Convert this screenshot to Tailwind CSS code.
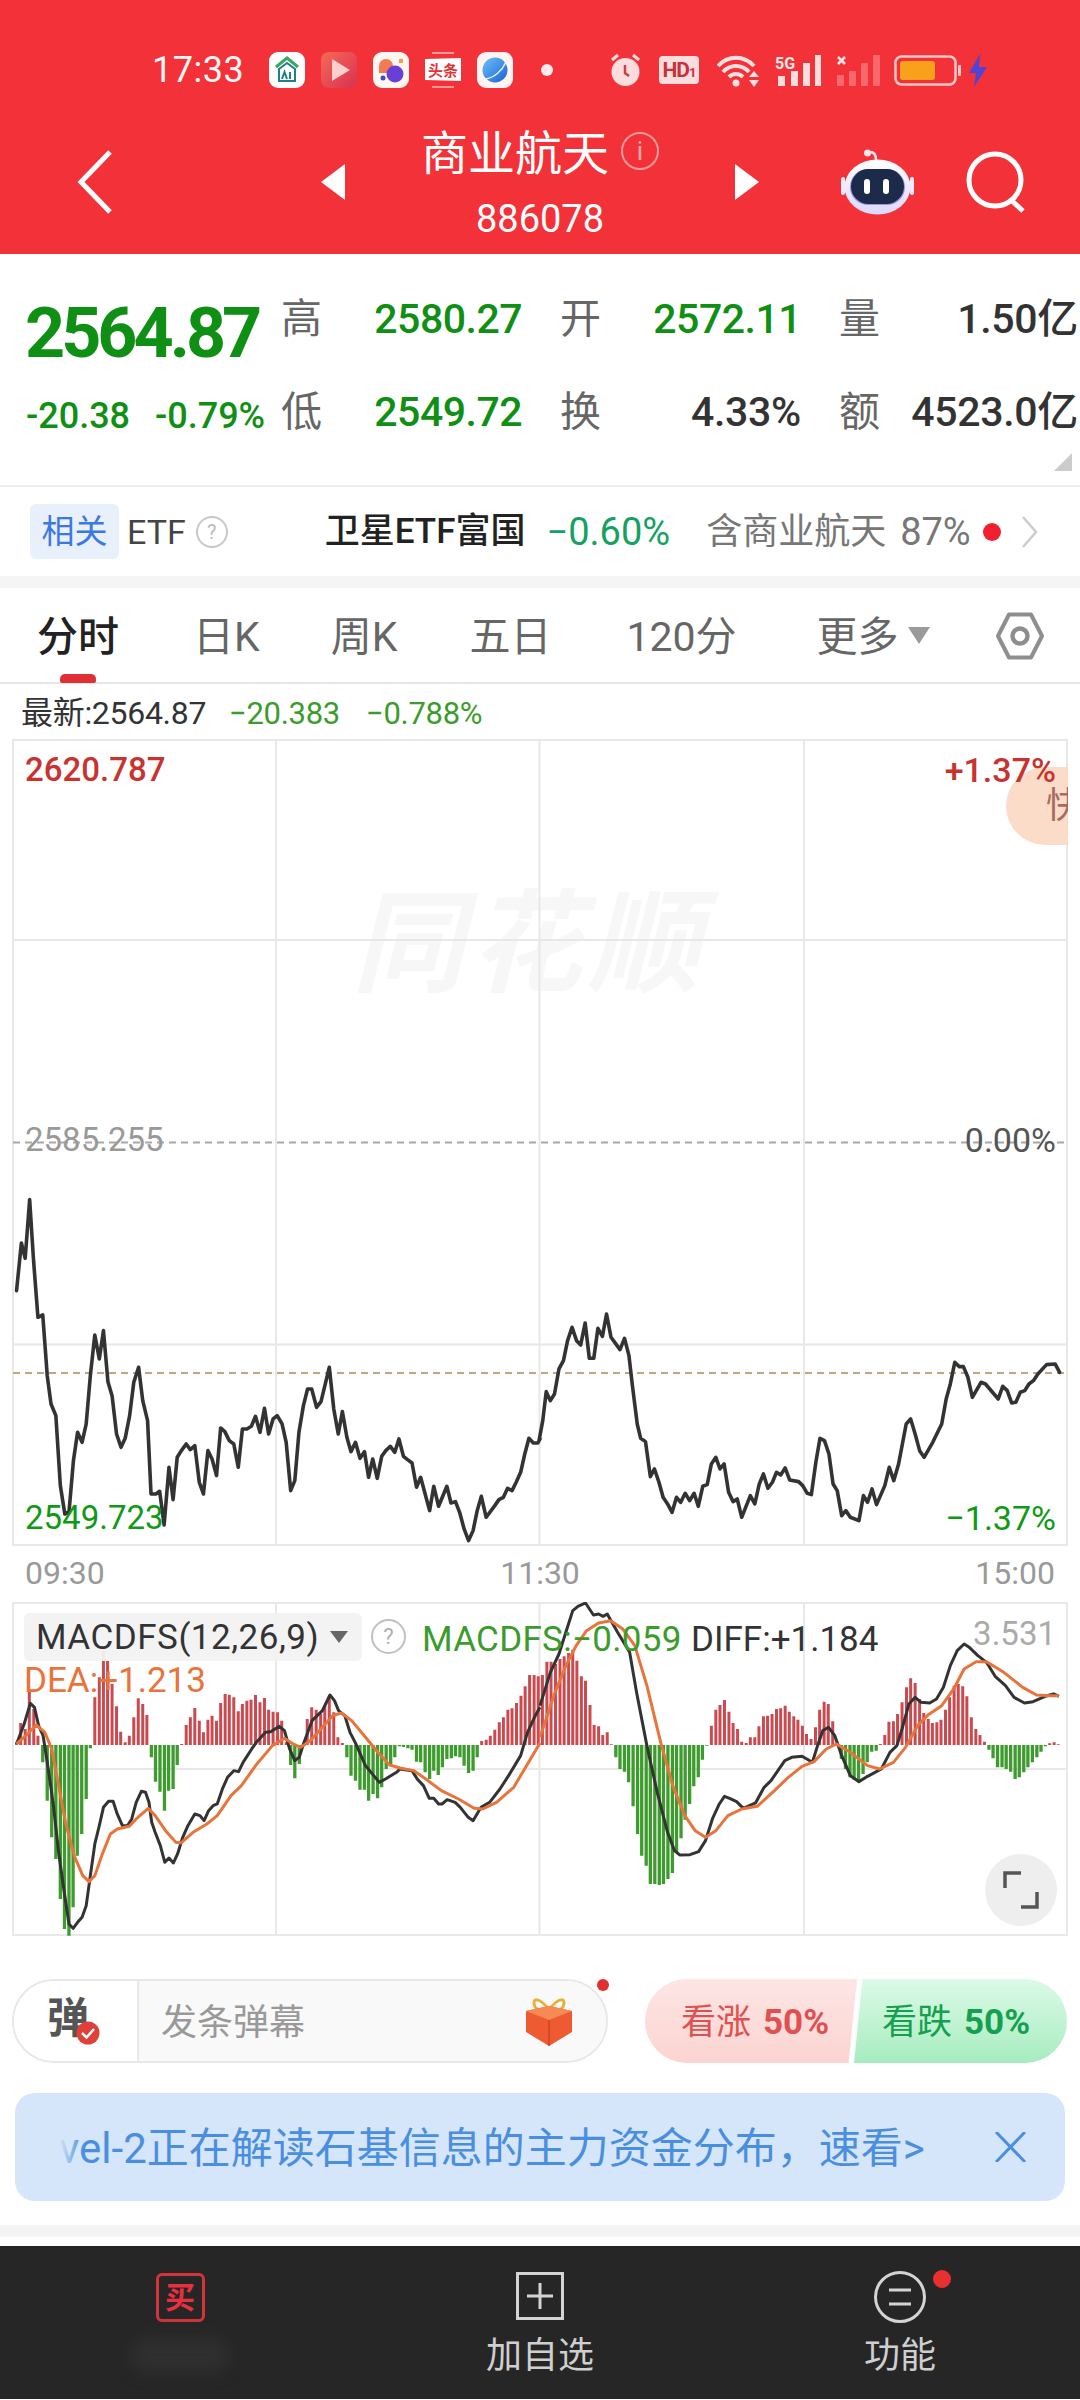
<!DOCTYPE html>
<html lang="zh-CN">
<head>
<meta charset="utf-8">
<script src="https://cdn.jsdelivr.net/npm/@tailwindcss/browser@4"></script>
</head>
<body class="m-0 bg-white font-['Roboto','Noto_Sans_CJK_SC',sans-serif]">
<div class="w-[1080px] h-[2400px] overflow-hidden flex flex-col bg-white">

<!-- HEADER -->
<header class="h-[254px] shrink-0 bg-[#f23238] flex flex-col text-white">
  <div class="mt-[50px] h-[40px] flex items-center pl-[152px]">
    <span class="w-[92px] text-[36px] leading-none text-[#fff6f6] tracking-[0.5px]">17:33</span>
    <svg class="ml-[25px]" width="36" height="36" viewBox="0 0 36 36"><rect width="36" height="36" rx="9" fill="#fff"/><path d="M7 15 18 6l11 9" fill="none" stroke="#3aa864" stroke-width="3"/><path d="M10 17 18 11l8 6v12H10z" fill="none" stroke="#1f7f8c" stroke-width="2"/><path d="M13 27l2.500-7 2.500 7M21 20v7" fill="none" stroke="#1f7f8c" stroke-width="2"/></svg>
    <svg class="ml-[16px]" width="36" height="36" viewBox="0 0 36 36"><defs><linearGradient id="p1" x1="0" y1="0" x2="1" y2="1"><stop offset="0" stop-color="#f56a58"/><stop offset="1" stop-color="#d9304f"/></linearGradient></defs><rect width="36" height="36" rx="8" fill="url(#p1)"/><path d="M11 7 29 18 11 29z" fill="#fbd0cc"/></svg>
    <svg class="ml-[16px]" width="36" height="36" viewBox="0 0 36 36"><rect width="36" height="36" rx="9" fill="#fff6f2"/><path d="M6 21V14a7 7 0 0 1 14 0v7z" fill="#f47a50"/><circle cx="22" cy="22" r="8.500" fill="#6a3fd8"/><rect x="26" y="7" width="4" height="4" fill="#f2a13a"/><circle cx="10" cy="26" r="2.500" fill="#3f4fb8"/></svg>
    <svg class="ml-[16px]" width="36" height="36" viewBox="0 0 36 36"><path d="M7 1h22M7 35h22" stroke="#fff" stroke-width="1"/><path d="M0 7 36 6V29L0 28z" fill="#fff"/><text x="18" y="24" text-anchor="middle" font-size="15" font-weight="700" fill="#e0353a" font-family="Noto Sans CJK SC">头条</text></svg>
    <svg class="ml-[16px]" width="36" height="36" viewBox="0 0 36 36"><defs><linearGradient id="p2" x1="0" y1="0" x2="1" y2="1"><stop offset="0" stop-color="#6cc0f6"/><stop offset="1" stop-color="#1a62d8"/></linearGradient></defs><rect width="36" height="36" rx="9" fill="#fff4f2"/><circle cx="18" cy="18" r="12.500" fill="url(#p2)"/><path d="M8 27C17 26 25 19 29 10" fill="none" stroke="#e8f4ff" stroke-width="1.500"/></svg>
    <span class="ml-[28px] w-[12px] h-[12px] rounded-full bg-[#fdeaea]"></span>
    <svg class="ml-[56px]" width="33" height="34" viewBox="0 0 33 34"><circle cx="16.500" cy="19" r="14" fill="#fcdcdc"/><path d="M3 7 9 2M30 7 24 2" stroke="#fcdcdc" stroke-width="3"/><path d="M16 12v8l4 3" fill="none" stroke="#c8404a" stroke-width="2.500"/></svg>
    <span class="ml-[17px] w-[40px] h-[28px] rounded-[4px] bg-[#fcdcdc] text-[#c8303a] text-[21px] font-bold leading-[28px] text-center tracking-[-1px]">HD<span class="text-[13px]">1</span></span>
    <svg class="ml-[18px]" width="45" height="33" viewBox="0 0 45 33"><path d="M1 12C11 1 27 1 37 12M6 18C13 10 25 10 32 18M12 23C16 19 22 19 26 23" fill="none" stroke="#fde0e0" stroke-width="4"/><circle cx="19" cy="29" r="3.500" fill="#fde0e0"/><path d="M37 17l5 6h-10zM37 33l5-7h-10z" fill="#fde0e0"/></svg>
    <svg class="ml-[13px]" width="47" height="32" viewBox="0 0 47 32"><rect x="3" y="22" width="7" height="10" fill="#fcdcdc"/><rect x="16" y="17" width="7" height="15" fill="#fcdcdc"/><rect x="28" y="9" width="7" height="23" fill="#fcdcdc"/><rect x="40" y="1" width="6" height="31" fill="#fcdcdc"/><text x="0" y="15" font-size="16" font-weight="700" fill="#fde6e6" font-family="Roboto">5G</text></svg>
    <svg class="ml-[14px]" width="44" height="32" viewBox="0 0 44 32"><rect x="1" y="21" width="7" height="11" fill="#f9696c"/><rect x="13" y="17" width="7" height="15" fill="#f9696c"/><rect x="25" y="9" width="7" height="23" fill="#f9696c"/><rect x="37" y="1" width="7" height="31" fill="#f9696c"/><path d="M2 3l7 7M9 3 2 10" stroke="#fde6e6" stroke-width="2.500"/></svg>
    <svg class="ml-[14px]" width="68" height="31" viewBox="0 0 68 31"><rect x="1.500" y="1.500" width="60" height="28" rx="6" fill="none" stroke="#fbc8c8" stroke-width="2.500"/><rect x="6" y="6" width="35" height="19" rx="3" fill="#f9a11b"/><rect x="64" y="10" width="3" height="11" rx="1" fill="#fbc8c8"/></svg>
    <svg class="ml-[6px]" width="20" height="33" viewBox="0 0 20 33"><path d="M12 0 1 19h7l-2 14 13-20h-8z" fill="#4f45d4"/></svg>
  </div>
  <div class="mt-[40px] h-[104px] flex items-center pl-[77px]">
    <svg width="36" height="64" viewBox="0 0 36 64"><path d="M33 2 4 32 33 62" fill="none" stroke="#fff" stroke-width="5"/></svg>
    <svg class="ml-[208px]" width="24" height="36" viewBox="0 0 24 36"><path d="M24 0V36L0 18z" fill="#fff"/></svg>
    <div class="w-[390px] h-[104px] flex flex-col items-center">
      <div class="flex items-center h-[46px] mt-[1px]">
        <span class="text-[47px] leading-[46px]">商业航天</span>
        <span class="ml-[12px] -mt-[6px] w-[38px] h-[38px] rounded-full border-2 border-white/50 text-white/60 text-[26px] leading-[34px] text-center">i</span>
      </div>
      <span class="mt-[22px] text-[38px] leading-[40px]">886078</span>
    </div>
    <svg width="24" height="36" viewBox="0 0 24 36"><path d="M0 0V36L24 18z" fill="#fff"/></svg>
    <svg class="ml-[81px]" width="74" height="66" viewBox="0 0 74 66"><defs><linearGradient id="rb" x1="0" y1="0" x2="0" y2="1"><stop offset="0" stop-color="#fff"/><stop offset="1" stop-color="#dcd8fb"/></linearGradient></defs><circle cx="27.500" cy="4" r="3.500" fill="#fbe4ea"/><path d="M30 3c4 0 6 3 6 8" fill="none" stroke="#f4e8f0" stroke-width="2.500"/><rect x="1" y="28" width="4" height="18" rx="2" fill="#eeeafc"/><rect x="70" y="28" width="4" height="18" rx="2" fill="#eeeafc"/><ellipse cx="37.500" cy="38" rx="33" ry="27.500" fill="url(#rb)"/><rect x="10" y="20" width="55" height="36" rx="18" fill="#9c92ee"/><rect x="11" y="20" width="53" height="35" rx="17.500" fill="#1d2b4b"/><rect x="24" y="30" width="6" height="15" rx="3" fill="#fff"/><rect x="43" y="30" width="6" height="15" rx="3" fill="#fff"/></svg>
    <svg class="ml-[52px]" width="62" height="62" viewBox="0 0 62 62"><circle cx="29" cy="29" r="26" fill="none" stroke="#fff" stroke-width="5"/><path d="M44 48 57 60" stroke="#fff" stroke-width="5"/></svg>
  </div>
</header>

<!-- STATS -->
<section class="relative h-[231px] shrink-0 flex">
  <div class="w-[281px] pl-[25px] flex flex-col">
    <span class="mt-[50px] text-[70px] leading-[58px] font-bold text-[#0f8f14] tracking-[-4px] whitespace-nowrap">2564.87</span>
    <div class="mt-[34px] flex text-[36px] leading-[40px] font-medium text-[#0f8f14]">
      <span class="w-[130px] pl-[1px]">-20.38</span><span>-0.79%</span>
    </div>
  </div>
  <div class="mt-[40px] grid grid-cols-[241px_241px_239px] gap-x-[38px] gap-y-[43px] h-[143px] text-[41px] leading-[50px] font-medium">
    <div class="flex justify-between"><span class="font-normal text-[#666]">高</span><span class="text-[#0f8f14] tracking-[-0.5px]">2580.27</span></div>
    <div class="flex justify-between"><span class="font-normal text-[#666]">开</span><span class="text-[#0f8f14] tracking-[-0.5px]">2572.11</span></div>
    <div class="flex justify-between"><span class="font-normal text-[#666]">量</span><span class="text-[#333] tracking-[-0.3px]">1.50亿</span></div>
    <div class="flex justify-between"><span class="font-normal text-[#666]">低</span><span class="text-[#0f8f14] tracking-[-0.5px]">2549.72</span></div>
    <div class="flex justify-between"><span class="font-normal text-[#666]">换</span><span class="text-[#333] tracking-[-0.3px]">4.33%</span></div>
    <div class="flex justify-between"><span class="font-normal text-[#666]">额</span><span class="text-[#333] tracking-[-0.3px]">4523.0亿</span></div>
  </div>
  <svg class="absolute right-[8px] bottom-[14px]" width="18" height="18" viewBox="0 0 18 18"><path d="M18 0V18H0z" fill="#ccc"/></svg>
</section>

<!-- ETF ROW -->
<section class="h-[91px] shrink-0 border-t-2 border-[#ececec] flex items-center text-[36px] leading-none">
  <span class="ml-[30px] w-[89px] h-[55px] rounded-[6px] bg-[#e8f0fc] text-[#3d78e0] text-[33px] leading-[55px] text-center">相关</span>
  <span class="ml-[8px] text-[#444] text-[34px]">ETF</span>
  <span class="ml-[10px] w-[32px] h-[32px] rounded-full border-2 border-[#c8c8c8] text-[#bbb] text-[20px] leading-[28px] text-center">?</span>
  <span class="ml-[97px] text-[#222] text-[35px] font-medium whitespace-nowrap">卫星ETF富国</span>
  <span class="ml-[21px] text-[#15a162] text-[38px] whitespace-nowrap">−0.60%</span>
  <span class="ml-[36px] text-[#777] whitespace-nowrap">含商业航天</span>
  <span class="ml-[14px] text-[#777] text-[38px]">87%</span>
  <span class="ml-[12px] w-[18px] h-[18px] rounded-full bg-[#f02030]"></span>
  <svg class="ml-[20px]" width="17" height="32" viewBox="0 0 17 32"><path d="M2 1 15 16 2 31" fill="none" stroke="#ccc" stroke-width="2.500"/></svg>
</section>
<div class="h-[12px] shrink-0 bg-[#f5f5f5]"></div>

<!-- TABS -->
<nav class="relative h-[96px] shrink-0 border-b-2 border-[#e6e6e6] flex items-center pl-[37px] pt-[5px] text-[41px] leading-none text-[#666]">
  <span class="text-[#222] font-medium">分时</span>
  <span class="ml-[74px]">日K</span>
  <span class="ml-[71px]">周K</span>
  <span class="ml-[72px]">五日</span>
  <span class="ml-[75px]">120分</span>
  <span class="ml-[80px]">更多</span>
  <svg class="ml-[9px] -mt-[5px]" width="22" height="17" viewBox="0 0 22 17"><path d="M0 0H22L11 17z" fill="#9a9a9a"/></svg>
  <svg class="absolute left-[996px] top-[24px]" width="48" height="48" viewBox="0 0 48 48"><path d="M13 2.500H35L46 24 35 45.500H13L2 24z" fill="none" stroke="#8e8e8e" stroke-width="4" stroke-linejoin="round"/><circle cx="24" cy="24" r="7.500" fill="none" stroke="#8e8e8e" stroke-width="4.500"/></svg>
  <span class="absolute left-[60px] bottom-[-1px] w-[36px] h-[9px] rounded-t-[5px] rounded-b-[2px] bg-[#e03035]"></span>
</nav>

<!-- LATEST LINE -->
<div class="h-[55px] shrink-0 flex items-center pl-[21px] pt-[3px] text-[31px] leading-none tracking-[-0.3px]">
  <span class="text-[#333] w-[208px] text-[32px] whitespace-nowrap">最新:2564.87</span>
  <span class="text-[#3b9c2c] w-[137px]">−20.383</span>
  <span class="text-[#3b9c2c]">−0.788%</span>
</div>

<!-- MAIN CHART -->
<div class="relative w-[1056px] h-[807px] ml-[12px] shrink-0 overflow-hidden">
  <span class="absolute left-[340px] top-[150px] text-[112px] leading-none font-bold italic text-[#f7f7f7] tracking-[6px] whitespace-nowrap">同花顺</span>
  <svg class="absolute inset-0" width="1056" height="807" viewBox="12 740 1056 807" fill="none">
    <g stroke="#e8e8e8" stroke-width="2">
      <path d="M13 741H1067V1546H13zM276 741V1546M539.500 741V1546M804 741V1546M13 941H1067M13 1345.500H1067"/>
    </g>
    <path d="M13 1143.500H1067" stroke="#a8a8a8" stroke-width="2" stroke-dasharray="7 5"/>
    <path d="M13 1374H1067" stroke="#c2a67e" stroke-width="2" stroke-dasharray="7 5"/>
    <g transform="translate(0 1100) scale(.3448 .3333)" stroke="#333" stroke-width="3.600" stroke-linejoin="round" stroke-linecap="round">
      <polyline vector-effect="non-scaling-stroke" points="48,575 62,432 73,478 86,302 97,480 110,655 124,648 137,830 148,915 162,950 175,1160 188,1245 200,1240 213,1085 225,1000 238,1030 250,975 262,830 275,708 288,780 300,695 313,848 325,890 338,1005 351,1045 363,1018 376,950 388,850 402,805 414,905 428,965 438,1185 452,1185 463,1177 476,1278 490,1105 502,1202 514,1075 526,1055 540,1035 552,1052 565,1040 578,1150 590,1185 603,1055 615,1080 628,1130 640,987 652,998 665,1025 678,1035 691,1105 703,990 716,990 729,982 741,952 754,1000 767,928 779,1005 792,960 804,950 818,975 830,1030 843,1175 855,1145 867,1000 880,920 892,870 904,870 918,925 931,908 955,805 968,930 981,1005 993,938 1006,1015 1018,1058 1031,1030 1044,1078 1057,1058 1069,1135 1081,1080 1094,1138 1107,1072 1119,1055 1132,1042 1145,1060 1157,1020 1170,1072 1182,1082 1195,1092 1208,1165 1220,1135 1233,1185 1246,1235 1258,1162 1272,1222 1296,1162 1308,1212 1321,1208 1333,1240 1346,1290 1359,1325 1372,1295 1384,1235 1396,1192 1410,1255 1435,1220 1447,1202 1460,1195 1472,1168 1485,1175 1497,1150 1510,1120 1522,1065 1534,1018 1547,1032 1560,1032 1566,1020"/>
    </g>
    <g transform="translate(540 1100) scale(.3448 .3333)" stroke="#333" stroke-width="3.600" stroke-linejoin="round" stroke-linecap="round">
      <polyline vector-effect="non-scaling-stroke" points="-2,1020 8,965 18,878 30,905 42,885 55,810 68,785 80,725 93,685 106,725 118,738 131,672 143,778 156,778 168,688 181,712 193,645 206,715 232,752 245,718 258,770 268,860 282,975 292,1018 306,1028 320,1133 332,1110 345,1150 357,1195 370,1215 383,1240 396,1195 408,1210 421,1183 434,1205 447,1183 459,1222 472,1162 485,1157 497,1095 510,1075 522,1110 534,1095 547,1180 560,1208 572,1200 585,1255 610,1190 623,1215 636,1155 648,1125 661,1168 674,1150 686,1120 698,1128 711,1107 724,1143 750,1148 762,1160 775,1183 787,1187 800,1090 812,1018 825,1025 838,1065 850,1155 862,1175 875,1250 887,1235 900,1255 925,1265 938,1190 950,1210 963,1170 976,1217 1000,1160 1013,1105 1026,1145 1040,1095 1062,975 1075,960 1088,1005 1101,1055 1114,1075 1139,1030 1165,975 1178,900 1190,855 1203,790 1216,803 1228,803 1241,835 1254,895 1279,850 1292,855 1329,900 1342,862 1355,875 1368,912 1380,910 1393,880 1406,875 1418,855 1431,845 1444,825 1469,797 1494,795 1507,820"/>
    </g>
  </svg>
  <span class="absolute left-[13px] top-[14px] text-[33px] leading-none font-medium text-[#c8332f]">2620.787</span>
  <span class="absolute right-[12px] top-[14px] text-[34px] leading-none font-medium text-[#c8332f] z-10">+1.37%</span>
  <div class="absolute right-0 top-[28px] w-[62px] h-[78px] rounded-l-[39px] bg-[#fbdcc8] overflow-hidden"><span class="absolute left-[40px] top-[21px] text-[36px] leading-none text-[#a96a62]">快</span></div>
  <span class="absolute left-[13px] top-[384px] text-[33px] leading-none text-[#999]">2585.255</span>
  <span class="absolute right-[12px] top-[384px] text-[34px] leading-none text-[#555]">0.00%</span>
  <span class="absolute left-[13px] top-[762px] text-[33px] leading-none text-[#0f9a15]">2549.723</span>
  <span class="absolute right-[12px] top-[762px] text-[34px] leading-none text-[#0f9a15]">−1.37%</span>
</div>

<!-- TIME AXIS -->
<div class="h-[56px] shrink-0 flex items-center justify-between px-[25px] pb-[2px] text-[32px] leading-none text-[#999]">
  <span>09:30</span><span>11:30</span><span>15:00</span>
</div>

<!-- MACD -->
<div class="relative w-[1056px] h-[334px] ml-[12px] shrink-0 overflow-hidden">
  <svg class="absolute inset-0" width="1056" height="334" viewBox="12 1603 1056 334" fill="none">
    <path d="M13 1604H1067V1936H13zM276 1604V1936M539.500 1604V1936M804 1604V1936M13 1770H1067" stroke="#e8e8e8" stroke-width="2"/>
    <g transform="translate(0 1590) scale(.3448 .3333)">
      <path vector-effect="non-scaling-stroke" stroke="#cb4a50" stroke-width="3" d="M48 468V460M60 468V402M73 468V420M85 468V300M98 468V360M110 468V440M275 468V325M288 468V265M300 468V185M312 468V215M325 468V285M338 468V352M350 468V428M363 468V460M375 468V440M388 468V385M401 468V328M414 468V345M426 468V378M527 468V465M540 468V408M552 468V385M565 468V357M578 468V395M590 468V430M603 468V392M615 468V380M628 468V395M640 468V342M653 468V315M665 468V317M678 468V325M691 468V367M703 468V345M716 468V335M728 468V332M741 468V318M754 468V340M767 468V327M779 468V362M792 468V368M805 468V370M817 468V395M830 468V460M891 468V390M904 468V355M917 468V362M930 468V375M942 468V350M955 468V320M968 468V370M980 468V445M993 468V462M1397 468V456M1410 468V452M1422 468V440M1435 468V422M1448 468V400M1460 468V385M1473 468V362M1485 468V358M1498 468V342M1511 468V320M1523 468V292M1536 468V258M1549 468V258M1561 468V262"/>
      <path vector-effect="non-scaling-stroke" stroke="#3d9c2d" stroke-width="3.300" d="M124 468V520M137 468V635M150 468V745M162 468V810M175 468V930M187 468V1020M200 468V1040M212 468V955M224 468V800M237 468V735M250 468V630M262 468V478M439 468V505M451 468V578M464 468V608M477 468V665M489 468V605M502 468V600M514 468V528M843 468V528M855 468V568M868 468V525M1006 468V505M1018 468V560M1031 468V575M1044 468V602M1057 468V602M1069 468V635M1082 468V615M1095 468V628M1107 468V595M1120 468V540M1133 468V530M1145 468V505M1158 468V472M1170 468V474M1183 468V478M1195 468V482M1208 468V518M1220 468V520M1233 468V550M1246 468V570M1258 468V545M1271 468V558M1283 468V535M1296 468V510M1309 468V508M1321 468V502M1334 468V505M1346 468V530M1359 468V552M1372 468V545M1384 468V505"/>
      <polyline vector-effect="non-scaling-stroke" stroke="#333" stroke-width="3" stroke-linejoin="round" points="48,465 70,405 88,343 100,355 112,410 125,440 140,540 155,650 170,790 185,900 200,1005 212,1018 225,1000 238,985 250,950 262,860 275,765 288,710 300,655 315,637 328,637 340,675 355,710 370,710 382,690 395,640 410,607 422,610 432,640 440,700 450,730 465,770 478,820 490,807 503,822 515,795 530,745 545,710 565,675 580,680 592,695 605,665 618,650 630,645 645,600 660,565 678,545 692,548 705,520 730,480 745,458 770,430 785,428 810,412 825,425 840,480 855,515 868,505 880,465 905,395 935,365 957,318 970,335 982,365 1000,380 1015,430 1030,460 1060,530 1100,580 1118,570 1150,550 1160,540 1195,545 1210,570 1228,590 1245,628 1258,628 1272,645 1282,645 1297,632 1320,640 1335,655 1358,685 1372,695 1395,655 1420,640 1450,600 1475,560 1510,500 1530,430 1550,385 1566,355"/>
      <polyline vector-effect="non-scaling-stroke" stroke="#e8743c" stroke-width="3" stroke-linejoin="round" points="48,465 75,440 105,408 130,430 150,480 170,590 190,700 215,800 240,860 258,878 275,860 295,800 320,735 340,720 375,712 395,690 430,658 450,680 480,725 510,760 525,762 560,730 600,705 630,680 670,620 700,590 745,525 790,470 825,448 850,465 872,475 900,455 935,415 965,380 990,372 1020,395 1060,445 1100,495 1130,528 1160,537 1200,545 1235,570 1280,605 1330,630 1375,658 1400,660 1440,640 1490,595 1530,525 1566,462"/>
    </g>
    <g transform="translate(540 1590) scale(.3448 .3333)">
      <path vector-effect="non-scaling-stroke" stroke="#cb4a50" stroke-width="3" d="M7 468V258M20 468V218M32 468V218M45 468V225M58 468V210M70 468V202M83 468V192M95 468V182M107 468V215M120 468V262M132 468V275M145 468V348M157 468V408M170 468V412M182 468V438M195 468V430M207 468V466M497 468V410M510 468V362M522 468V348M535 468V333M548 468V368M560 468V402M573 468V420M585 468V458M598 468V462M610 468V445M623 468V445M635 468V412M648 468V382M660 468V380M673 468V375M686 468V360M698 468V358M711 468V350M723 468V368M736 468V382M748 468V392M761 468V410M773 468V435M786 468V450M799 468V415M811 468V362M824 468V338M836 468V345M849 468V397M861 468V460M987 468V465M1000 468V438M1012 468V398M1025 468V397M1037 468V375M1050 468V340M1063 468V295M1075 468V268M1088 468V282M1101 468V330M1113 468V372M1126 468V390M1138 468V402M1151 468V400M1163 468V392M1176 468V362M1188 468V325M1201 468V290M1213 468V285M1226 468V292M1238 468V322M1251 468V385M1264 468V420M1276 468V438M1289 468V458M1478 468V463M1491 468V460M1503 468V466"/>
      <path vector-effect="non-scaling-stroke" stroke="#3d9c2d" stroke-width="3.300" d="M220 468V505M232 468V540M245 468V548M257 468V580M270 468V652M283 468V735M295 468V800M308 468V830M320 468V885M333 468V885M346 468V888M358 468V885M371 468V870M384 468V852M396 468V790M409 468V748M421 468V692M434 468V645M446 468V592M459 468V565M471 468V512M484 468V470M874 468V510M886 468V540M899 468V565M911 468V572M924 468V578M937 468V555M949 468V520M962 468V488M975 468V485M1302 468V482M1314 468V508M1327 468V535M1340 468V535M1352 468V540M1365 468V548M1378 468V570M1390 468V565M1403 468V550M1415 468V535M1428 468V520M1441 468V505M1453 468V488M1466 468V472"/>
      <polyline vector-effect="non-scaling-stroke" stroke="#333" stroke-width="3" stroke-linejoin="round" points="0,350 30,250 55,195 75,130 95,65 110,52 132,42 155,78 170,75 183,82 195,75 225,130 260,190 280,310 310,470 340,610 370,730 390,785 405,798 435,797 460,788 480,755 500,690 520,645 535,622 550,628 570,638 590,658 625,642 650,595 670,575 710,515 730,505 760,502 790,520 805,470 820,425 837,415 855,440 875,500 900,560 925,578 950,562 990,540 1015,490 1035,470 1050,420 1070,345 1088,325 1105,340 1130,342 1150,330 1170,295 1190,230 1210,185 1230,165 1245,175 1270,200 1295,220 1320,262 1350,290 1375,325 1405,342 1430,338 1465,322 1490,315 1505,322"/>
      <polyline vector-effect="non-scaling-stroke" stroke="#e8743c" stroke-width="3" stroke-linejoin="round" points="0,445 40,320 75,230 105,170 135,125 170,102 205,95 240,120 275,170 310,290 350,460 385,590 420,680 450,725 480,745 510,725 545,680 585,660 630,652 680,605 720,565 760,532 795,518 830,480 860,465 900,490 950,530 985,540 1025,520 1060,475 1095,410 1125,378 1165,350 1200,300 1230,240 1265,218 1295,218 1345,250 1400,295 1440,318 1480,320 1505,320"/>
    </g>
  </svg>
  <div class="absolute left-[12px] top-[11px] w-[338px] h-[48px] rounded-[6px] bg-[#f2f2f2]/95 flex items-center pl-[12px]">
    <span class="text-[35px] leading-none text-[#333] tracking-[0.5px] whitespace-nowrap">MACDFS(12,26,9)</span>
    <svg class="absolute left-[306px] top-[18px]" width="18" height="12" viewBox="0 0 18 12"><path d="M0 0H18L9 12z" fill="#666"/></svg>
  </div>
  <span class="absolute left-[359px] top-[17px] w-[35px] h-[35px] rounded-full border-2 border-[#c0c0c0] text-[#b0b0b0] text-[22px] leading-[31px] text-center">?</span>
  <span class="absolute left-[410px] top-[20px] text-[35px] leading-none text-[#3b9c2c] tracking-[0.3px] whitespace-nowrap">MACDFS:−0.059</span>
  <span class="absolute left-[679px] top-[20px] text-[35px] leading-none text-[#333] whitespace-nowrap">DIFF:+1.184</span>
  <span class="absolute right-[12px] top-[15px] text-[33px] leading-none text-[#aaa]">3.531</span>
  <span class="absolute left-[12px] top-[61px] text-[35px] leading-none text-[#e8743c] whitespace-nowrap">DEA:+1.213</span>
  <div class="absolute left-[973px] top-[252px] w-[72px] h-[72px] rounded-full bg-[#eeeeee] flex items-center justify-center">
    <svg width="36" height="38" viewBox="0 0 36 38"><path d="M2 17V2H18M34 21V36H18" fill="none" stroke="#555" stroke-width="3.500"/></svg>
  </div>
</div>

<!-- ACTION ROW -->
<div class="mt-[43px] h-[84px] shrink-0 flex pl-[12px]">
  <div class="relative w-[596px] h-[84px] flex">
    <div class="w-full h-full rounded-[42px] border-2 border-[#e8e8e8] overflow-hidden flex">
      <div class="relative w-[123px] bg-white shrink-0">
        <span class="absolute left-[33px] top-[17px] text-[42px] leading-none font-bold text-[#555]">弹</span>
        <svg class="absolute left-[62px] top-[40px]" width="24" height="24" viewBox="0 0 24 24"><circle cx="12" cy="12" r="11.500" fill="#e0403a"/><path d="M6 12l4.500 4.500L18 8" fill="none" stroke="#fff" stroke-width="2.500"/></svg>
      </div>
      <div class="flex-1 flex items-center border-l-2 border-[#e8e8e8] bg-[#f9f9f9] pl-[22px] pt-[3px] text-[36px] leading-none text-[#999]">发条弹幕</div>
    </div>
    <svg class="absolute left-[513px] top-[17px]" width="48" height="50" viewBox="0 0 48 50"><path d="M24 14C14 0 6 2 10 11c2 3 8 4 14 4 6 0 12-1 14-4 4-9-4-11-14 3z" fill="none" stroke="#e8b23a" stroke-width="3"/><path d="M1 15 24 10 47 15 47 36 24 50 1 36z" fill="#ee5a32"/><path d="M1 15 24 24 47 15 24 10z" fill="#f68a52"/><path d="M24 24V50" stroke="#cf4424" stroke-width="1.500"/></svg>
    <span class="absolute right-[-1px] top-0 w-[12px] h-[12px] rounded-full bg-[#e03030]"></span>
  </div>
  <div class="ml-[37px] relative w-[422px] h-[84px]">
    <div class="absolute left-0 top-0 w-[212px] h-full rounded-l-[42px] bg-linear-to-b from-[#fde6e4] to-[#fbd4d1] [clip-path:polygon(0_0,100%_0,96%_100%,0_100%)] flex items-center pl-[36px] pt-[3px] whitespace-nowrap">
      <span class="text-[35px] leading-none text-[#e05050]">看涨</span><span class="ml-[12px] text-[35px] leading-none font-bold text-[#e05050]">50%</span>
    </div>
    <div class="absolute right-0 top-0 w-[213px] h-full rounded-r-[42px] bg-linear-to-b from-[#dcfae8] to-[#a6ecbf] [clip-path:polygon(4%_0,100%_0,100%_100%,0_100%)] flex items-center pl-[28px] pt-[3px] whitespace-nowrap">
      <span class="text-[35px] leading-none text-[#14a04e]">看跌</span><span class="ml-[12px] text-[35px] leading-none font-bold text-[#14a04e]">50%</span>
    </div>
  </div>
</div>

<!-- BANNER -->
<div class="mt-[30px] ml-[15px] relative w-[1050px] h-[108px] shrink-0 rounded-[20px] bg-[#d6e6fa] flex items-center pl-[44px] pt-[3px]">
  <span class="text-[42px] leading-none text-[#4a8fdf] whitespace-nowrap">vel-2正在解读石基信息的主力资金分布，速看&gt;</span>
  <span class="absolute left-[44px] top-[20px] w-[24px] h-[68px] bg-linear-to-r from-[#d6e6fa] to-transparent"></span>
  <svg class="absolute left-[980px] top-[39px]" width="31" height="30" viewBox="0 0 31 30"><path d="M1 0 30 30M30 0 1 30" stroke="#4a8fdf" stroke-width="3"/></svg>
</div>

<div class="mt-[24px] h-[12px] shrink-0 bg-[#f4f4f4]"></div>
<div class="h-[9px] shrink-0"></div>

<!-- FOOTER -->
<footer class="h-[153px] shrink-0 bg-[#262626] grid grid-cols-3 text-[36px] leading-none text-[#cfcfcf]">
  <div class="relative flex flex-col items-center pt-[27px]">
    <span class="w-[49px] h-[49px] rounded-[6px] border-[3px] border-[#d2343b] text-[#e83040] text-[30px] leading-[43px] font-bold text-center">买</span>
    <span class="mt-[16px] w-[100px] h-[34px] rounded-full bg-[#333]/70 blur-[8px]"></span>
  </div>
  <div class="flex flex-col items-center pt-[26px]">
    <svg width="48" height="48" viewBox="0 0 48 48"><path d="M1.500 1.500H46.500V46.500H1.500zM24 11V37M11 24H37" fill="none" stroke="#d4d4d4" stroke-width="3"/></svg>
    <span class="mt-[18px]">加自选</span>
  </div>
  <div class="relative flex flex-col items-center pt-[25px]">
    <svg width="52" height="52" viewBox="0 0 52 52"><circle cx="26" cy="26" r="24.500" fill="none" stroke="#d4d4d4" stroke-width="3"/><path d="M15 19H37M15 33H37" stroke="#d4d4d4" stroke-width="3"/></svg>
    <span class="mt-[15px]">功能</span>
    <span class="absolute left-[213px] top-[24px] w-[18px] h-[18px] rounded-full bg-[#e83030]"></span>
  </div>
</footer>

</div>
</body>
</html>
